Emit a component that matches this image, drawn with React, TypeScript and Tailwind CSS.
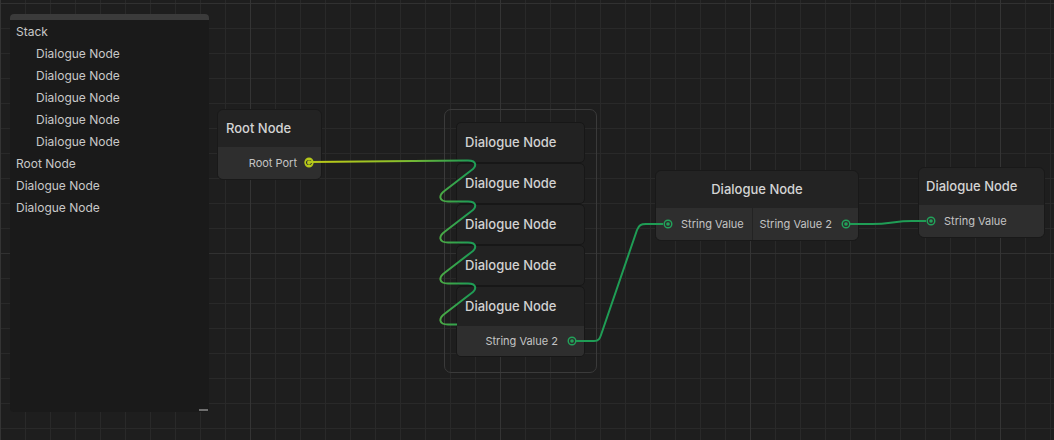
import React from "react";

const font = { fontFamily: "Inter, 'Noto Sans', sans-serif" };

function Port({ color }: { color: string }) {
  return (
    <svg width="10" height="10" viewBox="0 0 10 10" className="shrink-0">
      <circle cx="5" cy="5" r="3.8" fill="none" stroke={color} strokeWidth="1.4" />
      <circle cx="5" cy="5" r="1.8" fill={color} />
    </svg>
  );
}

const outline = [
  { label: "Stack", indent: false },
  { label: "Dialogue Node", indent: true },
  { label: "Dialogue Node", indent: true },
  { label: "Dialogue Node", indent: true },
  { label: "Dialogue Node", indent: true },
  { label: "Dialogue Node", indent: true },
  { label: "Root Node", indent: false },
  { label: "Dialogue Node", indent: false },
  { label: "Dialogue Node", indent: false },
];

function StackItem({ port }: { port?: boolean }) {
  return (
    <div className="overflow-hidden rounded-[5px] border border-[#171717] bg-[#222222]">
      <div className="flex h-[39px] items-center px-[8px] text-[13px] font-medium text-[#d2d2d2]">
        Dialogue Node
      </div>
      {port && (
        <div className="flex h-[30px] items-center justify-end gap-[9px] whitespace-nowrap bg-[#2e2e2e] pr-[7px] text-[11px] text-[#c4c4c4]">
          String Value 2
          <Port color="#22a25a" />
        </div>
      )}
    </div>
  );
}

function zig(y: number) {
  return `L 468 ${y} C 477 ${y} 477 ${y + 6} 471 ${y + 10} L 445 ${y + 30} C 438 ${y + 35} 439 ${y + 41} 448 ${y + 41} `;
}

export default function App() {
  const zigPath =
    "M 309 162 L 466 160.5 " +
    zig(160.5) +
    "L 466 201.5 " +
    zig(201.5) +
    "L 466 242.5 " +
    zig(242.5) +
    "L 466 283.5 " +
    zig(283.5) +
    "L 457 324.5";

  return (
    <div
      style={font}
      className="relative h-[440px] w-[1054px] overflow-hidden bg-[#1e1e1e] bg-[linear-gradient(to_right,#343434_1px,transparent_1px),linear-gradient(to_bottom,#313131_1px,transparent_1px),linear-gradient(to_right,#292929_1px,transparent_1px),linear-gradient(to_bottom,#292929_1px,transparent_1px)] bg-[size:250px_250px,250px_250px,25px_25px,25px_25px] bg-[position:0_3px,0_3px,0_3px,0_3px]"
    >
      {/* outline panel */}
      <div className="absolute left-[10px] top-[14px] flex h-[398px] w-[199px] flex-col rounded-[4px] bg-[#1a1a1a]">
        <div className="h-[6px] rounded-t-[4px] bg-[#3b3b3b]" />
        <div className="flex flex-col pt-[1px]">
          {outline.map((item, i) => (
            <div
              key={i}
              className={`flex h-[22px] items-center text-[12px] text-[#c8c8c8] ${item.indent ? "pl-[26px]" : "pl-[6px]"}`}
            >
              {item.label}
            </div>
          ))}
        </div>
        <div className="mt-auto mb-[1px] mr-[1px] h-[2px] w-[9px] self-end bg-[#6e6e6e]" />
      </div>

      {/* root node */}
      <div className="absolute left-[217px] top-[109px] w-[105px] overflow-hidden rounded-[6px] border border-[#191919] bg-[#232323]">
        <div className="flex h-[37px] items-center px-[8px] text-[13px] font-medium text-[#d4d4d4]">
          Root Node
        </div>
        <div className="flex h-[32px] items-center justify-end gap-[7px] whitespace-nowrap bg-[#2e2e2e] pr-[7px] text-[11px] text-[#c4c4c4]">
          Root Port
          <Port color="#b6c81a" />
        </div>
      </div>

      {/* stack group */}
      <div className="absolute left-[444px] top-[109px] flex h-[264px] w-[153px] flex-col rounded-[7px] border border-[#3a3a3a] px-[11px] pt-[12px]">
        <StackItem />
        <StackItem />
        <StackItem />
        <StackItem />
        <StackItem port />
      </div>

      {/* middle node */}
      <div className="absolute left-[655px] top-[170px] w-[204px] overflow-hidden rounded-[6px] border border-[#191919] bg-[#232323]">
        <div className="flex h-[37px] items-center justify-center text-[13px] font-medium text-[#d4d4d4]">
          Dialogue Node
        </div>
        <div className="flex h-[32px] whitespace-nowrap bg-[#2e2e2e] text-[11px] text-[#c4c4c4]">
          <div className="flex w-[97px] items-center gap-[8px] border-r border-[#232323] pl-[7px]">
            <Port color="#22a25a" />
            String Value
          </div>
          <div className="flex flex-1 items-center justify-end gap-[9px] pr-[7px]">
            String Value 2
            <Port color="#22a25a" />
          </div>
        </div>
      </div>

      {/* right node */}
      <div className="absolute left-[918px] top-[167px] w-[127px] overflow-hidden rounded-[6px] border border-[#191919] bg-[#232323]">
        <div className="flex h-[37px] items-center px-[7px] text-[13px] font-medium text-[#d4d4d4]">
          Dialogue Node
        </div>
        <div className="flex h-[32px] items-center gap-[8px] whitespace-nowrap bg-[#2e2e2e] pl-[7px] text-[11px] text-[#c4c4c4]">
          <Port color="#22a25a" />
          String Value
        </div>
      </div>

      {/* edges */}
      <svg className="pointer-events-none absolute inset-0" width="1054" height="440">
        <defs>
          <linearGradient id="rootEdge" gradientUnits="userSpaceOnUse" x1="330" y1="0" x2="470" y2="0">
            <stop offset="0" stopColor="#b6c81a" />
            <stop offset="0.45" stopColor="#8fc02a" />
            <stop offset="1" stopColor="#1f9d55" />
          </linearGradient>
        </defs>
        <path d={zigPath} fill="none" stroke="url(#rootEdge)" strokeWidth="2" strokeLinejoin="round" />
        <path
          d="M 576 341 L 594 341 C 599 341 600 338 601 335 L 637 230 C 639 225 641 224 646 224 L 663 224"
          fill="none"
          stroke="#1f9d55"
          strokeWidth="2"
        />
        <path
          d="M 850 224 L 872 224 C 890 224 895 221 912 221 L 926 221"
          fill="none"
          stroke="#1f9d55"
          strokeWidth="2"
        />
      </svg>

      {/* port marker drawn above its edge */}
      <div className="pointer-events-none absolute left-[304px] top-[157px]">
        <Port color="#b6c81a" />
      </div>
    </div>
  );
}
